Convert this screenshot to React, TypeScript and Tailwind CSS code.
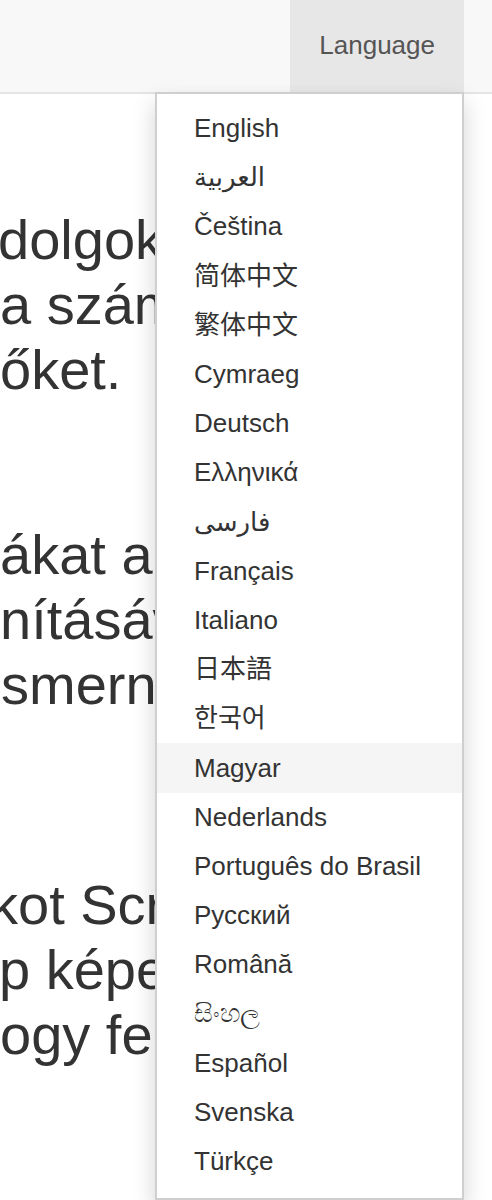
const languages = [
  'English',
  'العربية',
  'Čeština',
  '简体中文',
  '繁体中文',
  'Cymraeg',
  'Deutsch',
  'Ελληνικά',
  'فارسی',
  'Français',
  'Italiano',
  '日本語',
  '한국어',
  'Magyar',
  'Nederlands',
  'Português do Brasil',
  'Русский',
  'Română',
  'සිංහල',
  'Español',
  'Svenska',
  'Türkçe',
];

// the lines run on behind the open menu, so only their start shows
const paragraphs = [
  { mt: 'mt-[113px]', lines: [['dolgok az', '-ml-[2px]'], ['a számít', ''], ['őket.', '']] },
  { mt: 'mt-[120px]', lines: [['ákat a pr', ''], ['nításával', ''], ['smerni', 'ml-[1px]']] },
  { mt: 'mt-[155px]', lines: [['kot Scree', '-ml-[10px]'], ['p képer', '-ml-[1px]'], ['ogy felhasz', '']] },
];

export default function App() {
  return (
    <div
      className="min-h-[1200px] bg-white text-[#333] overflow-hidden"
      style={{ fontFamily: '"Liberation Sans", Arial, "Noto Sans CJK SC", "DejaVu Sans", sans-serif' }}
    >
      <header className="relative h-[94px] bg-[#f8f8f8] border-b-2 border-[#e4e4e4] flex justify-end pr-[28px]">
        <button className="h-full bg-[#e7e7e7] px-[29px] text-[26px] leading-[37px] text-[#555] pb-[2px]">
          Language
        </button>

        <ul className="absolute z-10 top-[92px] right-[28px] w-[309px] bg-white border-2 border-[#cfcfcf] shadow-[0_11px_22px_rgba(0,0,0,0.175)] pt-[10px] pb-[12px]">
          {languages.map((lang) => (
            <li
              key={lang}
              className={
                'h-[49.2px] flex items-center pl-[37px] text-[26px] leading-[37px] text-[#333] whitespace-nowrap ' +
                (lang === 'Magyar' ? 'bg-[#f5f5f5]' : '')
              }
            >
              {lang}
            </li>
          ))}
        </ul>
      </header>

      <main className="overflow-hidden">
        {paragraphs.map((p, i) => (
          <div key={i} className={p.mt}>
            {p.lines.map(([text, cls]) => (
              <div key={text} className={'whitespace-nowrap text-[56px] leading-[65px] ' + cls}>
                {text}
              </div>
            ))}
          </div>
        ))}
      </main>
    </div>
  );
}
